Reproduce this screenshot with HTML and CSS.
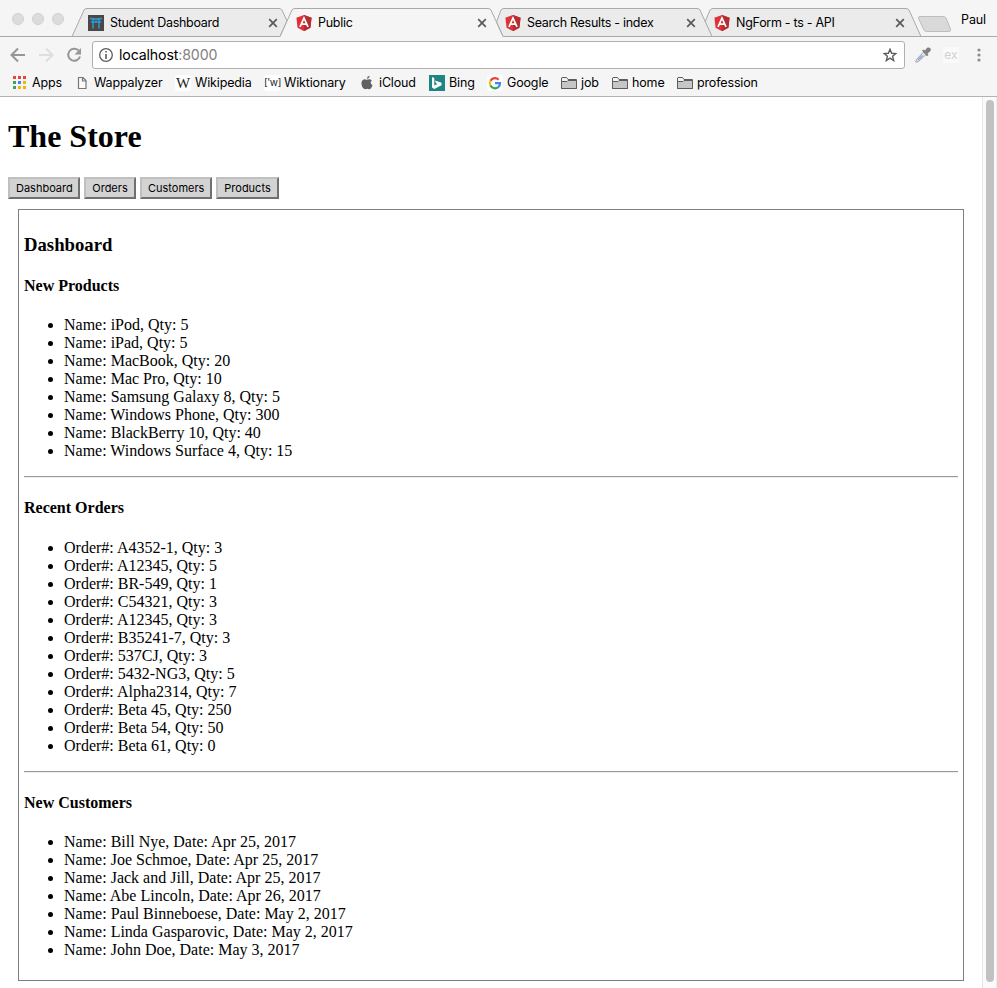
FILE: index.html
```html
<!DOCTYPE html>
<html lang="en">
<head>
<meta charset="utf-8">
<title>Public</title>
<link rel="stylesheet" href="styles.css">
</head>
<body>
<svg class="defs" width="0" height="0" aria-hidden="true">
  <symbol id="angular" viewBox="0 0 16 16"><path fill="#dd3237" d="M8 0l7.6 2.7-1.2 10L8 16.2l-6.4-3.5-1.2-10z"/><path fill="#b32d31" d="M8 0l7.6 2.7-1.2 10L8 16.2z"/><path fill="none" stroke="#fff" stroke-width="1.700" d="M4 11.800L8 3l4 8.800M5.400 9.200h5.200"/></symbol>
  <symbol id="close" viewBox="0 0 10 10"><path fill="none" stroke="#5a5a5a" stroke-width="1.7" d="M1.2 1.2l7.6 7.6M8.8 1.2L1.2 8.8"/></symbol>
  <symbol id="folder" viewBox="0 0 16 16"><path fill="#f4f4f4" stroke="#5c5c5c" d="M.5 13.500v-10.500l.5-.5h4.500l1.500 2h8.500v9z"/><path fill="#c6c6c6" stroke="#5c5c5c" d="M.5 13.500v-7h5.500l1-1h8.500v8z"/></symbol>
</svg>
<header class="chrome">
  <div class="tabstrip">
    <svg class="tab-shapes" width="997" height="38" aria-hidden="true">
      <g fill="#ebebeb" stroke="#a9a9a9">
        <path d="M711.500 36.500L705 22L710 10Q711 8.500 713 8.500H906Q908 8.500 909 10L921 36.500"/>
        <path d="M503 36.500L496.500 22L501 10Q502 8.500 504 8.500H697Q699 8.500 700 10L712 36.500"/>
        <path d="M72 36.500L84 10Q85 8.500 87 8.500H279Q281 8.500 282 10L287 21L280 36.500"/>
        <path fill="#f5f5f5" stroke="none" d="M280 37.500L292 10Q293 8.500 295 8.500H488Q490 8.500 491 10L503 37.500z"/>
        <path fill="none" d="M0 36.500H280L292 10Q293 8.500 295 8.500H488Q490 8.500 491 10L503 36.500H997"/>
        <path fill="#d9d9d9" stroke="#bdbdbd" d="M920 16.500H943Q945 16.500 946 18L950.500 29Q951 31.500 949 31.500H927Q925 31.500 924 30L918.500 18.500Q918 16.500 920 16.500z"/>
      </g>
    </svg>
    <div class="lights"><i></i><i></i><i></i></div>
    <nav class="tabs">
      <div class="tab"><svg class="fav" viewBox="0 0 16 16"><path fill="#4b4747" d="M0 0h16v16H0z"/><path fill="none" stroke="#2d9bd3" stroke-width="1.400" d="M2 3.500q6 1 12 0M3 7h10M5 4v9.500M11 4v9.500"/><path stroke="#2d9bd3" d="M8 4v3"/></svg><span>Student Dashboard</span><svg class="x"><use href="#close"/></svg></div>
      <div class="tab"><svg class="fav"><use href="#angular"/></svg><span>Public</span><svg class="x"><use href="#close"/></svg></div>
      <div class="tab"><svg class="fav"><use href="#angular"/></svg><span>Search Results - index</span><svg class="x"><use href="#close"/></svg></div>
      <div class="tab"><svg class="fav"><use href="#angular"/></svg><span>NgForm - ts - API</span><svg class="x"><use href="#close"/></svg></div>
    </nav>
    <div class="user">Paul</div>
  </div>
  <div class="toolbar">
    <svg class="nav-icons" width="84" height="20" viewBox="0 0 84 20"><g fill="none" stroke-width="2"><path stroke="#969696" d="M25 10H12M18 3.500L11.500 10L18 16.500"/><path stroke="#dedede" d="M39 10h13M46 3.500L52.500 10L46 16.500"/><path stroke="#969696" d="M78.500 5.500A6 6 0 1 0 80 11.500"/></g><path fill="#969696" d="M81 3v6.500h-6.500z"/></svg>
    <div class="address">
      <svg width="14" height="14" viewBox="0 0 14 14"><circle cx="7" cy="7" r="6.300" fill="none" stroke="#5c5c5c" stroke-width="1.300"/><path fill="#5c5c5c" d="M6.200 3h1.600v1.600H6.200zM6.200 6h1.600v5H6.200z"/></svg>
      <span class="url">localhost<span class="port">:8000</span></span>
      <svg class="star" width="14" height="14" viewBox="0 0 14 14"><path fill="none" stroke="#5c5c5c" stroke-width="1.400" d="M7 1.300l1.600 4 4.300.3-3.300 2.700 1.100 4.300L7 10.200l-3.700 2.400 1.100-4.300L1.100 5.600l4.300-.3z"/></svg>
    </div>
    <svg class="dropper" width="16" height="16" viewBox="0 0 16 16"><path fill="#dce4f6" stroke="#a5a5a5" d="M8.500 5L1.500 12.500L.8 15.200L3.500 14.500L11 7.500z"/><path stroke="#8fa6e6" stroke-width="1.600" d="M3 13l4.500-4.500"/><path fill="#808080" d="M7 3.500l1.500-1 1.500 1L12 .8q2-1 3.300.4T15 4.500L12.500 6.500l1 1.500-1.500 1.200z"/></svg>
    <span class="ex">ex</span>
    <svg class="dots" width="4" height="14" viewBox="0 0 4 14"><g fill="#8c8c8c"><circle cx="2" cy="2" r="1.600"/><circle cx="2" cy="7" r="1.600"/><circle cx="2" cy="12" r="1.600"/></g></svg>
  </div>
  <nav class="bookmarks">
    <a><svg viewBox="0 0 16 16"><path fill="#e8453c" d="M1 1h3v3H1zM6 1h3v3H6zM11 1h3v3h-3z"/><path fill="#3aa757" d="M1 6h3v3H1zM1 11h3v3H1z"/><path fill="#3f83f8" d="M6 6h3v3H6z"/><path fill="#f4b400" d="M11 6h3v3h-3zM6 11h3v3H6zM11 11h3v3h-3z"/></svg>Apps</a>
    <a><svg viewBox="0 0 16 16"><path fill="#fafafa" stroke="#777" stroke-width="1.200" d="M4.500 2.500h4.500l3 3v8h-7.500zM8.500 2.500v3.500h3.500"/></svg>Wappalyzer</a>
    <a><span class="w-icon">W</span>Wikipedia</a>
    <a><span class="wk-icon">['w]</span>Wiktionary</a>
    <a><svg viewBox="0 0 16 16"><path fill="#616161" d="M10.500.8q.2 2.600-2.600 3Q7.900 1.500 10.500.8zM8 4.800q2.800-1.500 4.900.6-2.800 2.200.6 4.800-1.300 4-3.500 4-2-.9-3.700 0Q3.500 14 2.500 9.500 2 5 5.200 4.200q1.300 0 2.800.6z"/></svg>iCloud</a>
    <a><svg viewBox="0 0 16 16"><path fill="#1f8583" d="M0 0h16v16H0z"/><path fill="#fff" d="M3 2l2.300.9v7.600L8.500 9 7 8.200 6 5.500l6.500 2.300v2.500L5.300 14 3 12.600z"/></svg>Bing</a>
    <a><svg viewBox="0 0 16 16"><rect width="16" height="16" rx="3" fill="#fcfcfc"/><g fill="none" stroke-width="2.200"><path stroke="#ea4335" d="M3.500 5.700A5 5 0 0 1 11.600 4.700"/><path stroke="#fbbc05" d="M3.500 5.700a5 5 0 0 0 0 5"/><path stroke="#34a853" d="M3.500 10.500a5 5 0 0 0 7.800 1.500"/><path stroke="#4285f4" d="M8 8.200h5q0 2.500-1.700 3.900"/></g></svg>Google</a>
    <a><svg><use href="#folder"/></svg>job</a>
    <a><svg><use href="#folder"/></svg>home</a>
    <a><svg><use href="#folder"/></svg>profession</a>
  </nav>
</header>
<div class="viewport">
  <main class="page">
    <h1>The Store</h1>
    <div class="menu"><button>Dashboard</button><button>Orders</button><button>Customers</button><button>Products</button></div>
    <section class="panel">
      <h3>Dashboard</h3>
      <h4>New Products</h4>
      <ul>
        <li>Name: iPod, Qty: 5</li>
        <li>Name: iPad, Qty: 5</li>
        <li>Name: MacBook, Qty: 20</li>
        <li>Name: Mac Pro, Qty: 10</li>
        <li>Name: Samsung Galaxy 8, Qty: 5</li>
        <li>Name: Windows Phone, Qty: 300</li>
        <li>Name: BlackBerry 10, Qty: 40</li>
        <li>Name: Windows Surface 4, Qty: 15</li>
      </ul>
      <hr>
      <h4>Recent Orders</h4>
      <ul>
        <li>Order#: A4352-1, Qty: 3</li>
        <li>Order#: A12345, Qty: 5</li>
        <li>Order#: BR-549, Qty: 1</li>
        <li>Order#: C54321, Qty: 3</li>
        <li>Order#: A12345, Qty: 3</li>
        <li>Order#: B35241-7, Qty: 3</li>
        <li>Order#: 537CJ, Qty: 3</li>
        <li>Order#: 5432-NG3, Qty: 5</li>
        <li>Order#: Alpha2314, Qty: 7</li>
        <li>Order#: Beta 45, Qty: 250</li>
        <li>Order#: Beta 54, Qty: 50</li>
        <li>Order#: Beta 61, Qty: 0</li>
      </ul>
      <hr>
      <h4>New Customers</h4>
      <ul>
        <li>Name: Bill Nye, Date: Apr 25, 2017</li>
        <li>Name: Joe Schmoe, Date: Apr 25, 2017</li>
        <li>Name: Jack and Jill, Date: Apr 25, 2017</li>
        <li>Name: Abe Lincoln, Date: Apr 26, 2017</li>
        <li>Name: Paul Binneboese, Date: May 2, 2017</li>
        <li>Name: Linda Gasparovic, Date: May 2, 2017</li>
        <li>Name: John Doe, Date: May 3, 2017</li>
      </ul>
    </section>
  </main>
  <div class="scrollbar"><div class="thumb"></div></div>
</div>
</body>
</html>
```
FILE: styles.css
```css
* { box-sizing: border-box; }
body { margin: 0; height: 988px; overflow: hidden; background: #fff; color: #000; font: 16px/18px "Liberation Serif", serif; }
.defs { position: absolute; }
svg { flex: none; }

.chrome { height: 97px; background: #f5f5f5; border-bottom: 1px solid #b3b3b3; font: 12.5px/16px Inter, sans-serif; }
.tabstrip { position: relative; display: flex; height: 37px; }
.tab-shapes { position: absolute; left: 0; top: 0; }
.lights { display: flex; gap: 8px; width: 88px; padding: 13px 0 0 12px; }
.lights i { width: 12px; height: 12px; border-radius: 50%; background: #dcdcdc; border: 1px solid #d0d0d0; }
.tabs { position: relative; display: flex; padding-top: 15px; }
.tab { display: flex; align-items: flex-start; width: 209px; padding-right: 18px; white-space: nowrap; }
.tab:first-child { width: 208px; }
.tab span { margin-left: 6px; letter-spacing: -.28px; }
.fav { width: 16px; height: 16px; }
.x { width: 10px; height: 10px; margin: 3px 0 0 auto; }
.user { position: relative; margin-left: 38px; padding-top: 12px; letter-spacing: -.1px; }

.toolbar { display: flex; align-items: center; height: 36px; }
.address { display: flex; align-items: center; width: 813px; height: 28px; margin-left: 8px; padding: 0 7px 0 6px; background: #fff; border: 1px solid #b0b0b0; border-radius: 3px; }
.url { margin-left: 6px; font-size: 14.200px; letter-spacing: -.15px; }
.port { color: #808080; }
.star { margin-left: auto; }
.dropper { margin-left: 10px; }
.ex { width: 16px; height: 16px; margin-left: 12px; background: #fafafa; color: #d0d0d0; font-size: 12px; line-height: 15px; text-align: center; }
.dots { margin-left: 18px; }

.bookmarks { display: grid; grid-template-columns: 62px 101px 89px 95px 70px 58px 74px 51px 65px 90px; padding: 2px 0 0 12px; letter-spacing: -.15px; }
.bookmarks a { display: flex; white-space: nowrap; }
.bookmarks a > svg, .w-icon, .wk-icon { flex: none; width: 16px; height: 16px; margin-right: 4px; }
.w-icon, .wk-icon { display: block; border-radius: 3px; background: #fff; color: #222; text-align: center; }
.w-icon { font: 15px/16px "Liberation Serif", serif; }
.wk-icon { font: 10px/15px Inter, sans-serif; letter-spacing: -.4px; }

.viewport { display: flex; height: 891px; }
.page { flex: 1; padding: 0 8px; }
h1 { margin: 21.440px 0; font-size: 32px; line-height: 37px; }
.menu { display: flex; gap: 4px; height: 22px; }
.menu button { height: 22px; padding: 0 6px; border: 2px solid; border-color: #c0c0c0 #707070 #707070 #c0c0c0; background: #d3d3d3; color: #000; font: 11px/16px Inter, sans-serif; }
.menu button:nth-child(1), .menu button:nth-child(3) { width: 72px; }
.menu button:nth-child(2) { width: 52px; }
.menu button:nth-child(4) { width: 63px; }
.panel { display: flow-root; margin: 10px; padding: 5px; border: 1px solid #808080; }
h3 { margin: 18.720px 0; font-size: 18.720px; line-height: 22px; }
h4 { margin: 21.280px 0; font-size: 16px; line-height: 18px; }
ul { margin: 16px 0; padding-left: 40px; }
hr { height: 2px; margin: 0; border: 0; border-top: 1px solid #9a9a9a; border-bottom: 1px solid #eee; }
.scrollbar { width: 15px; padding: 3px 0 0 3px; background: #fafafa; border-left: 1px solid #e6e6e6; border-right: 1px solid #ededed; }
.thumb { width: 8px; height: 882px; border-radius: 4px; background: #c1c1c1; }
```
